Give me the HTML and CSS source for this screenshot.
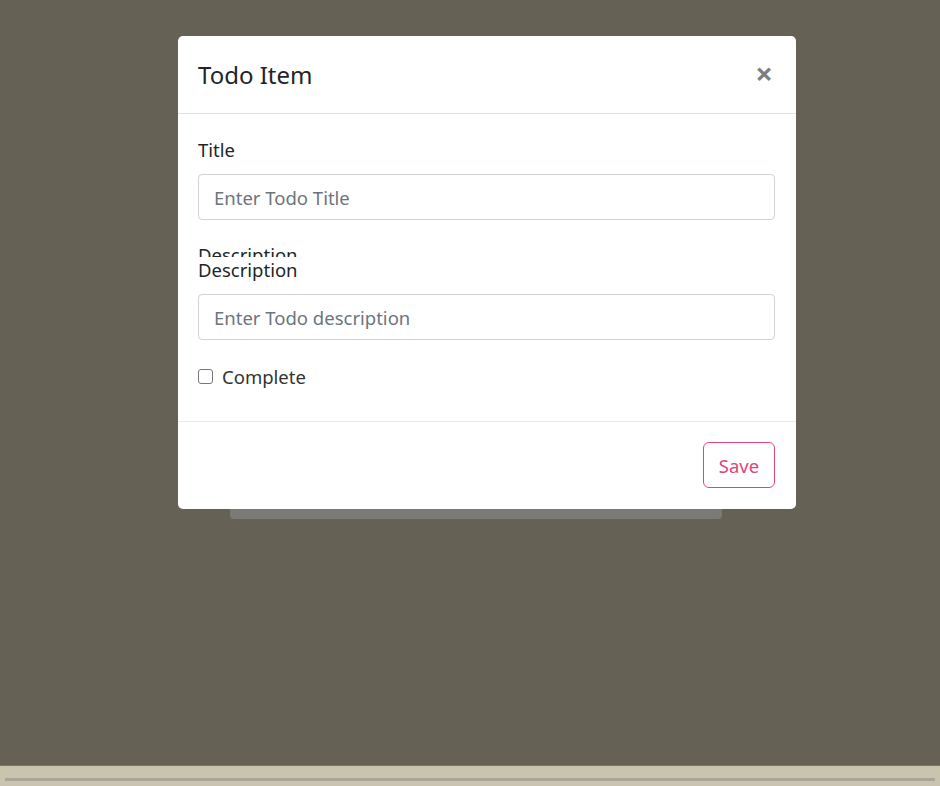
FILE: index.html
```html
<!DOCTYPE html>
<html>
<head>
<meta charset="utf-8">
<link rel="stylesheet" href="styles.css">
</head>
<body>
<div class="screen">
  <div class="page">
    <div class="card-behind"></div>
  </div>
  <div class="modal">
    <div class="modal-header">
      <h5 class="modal-title">Todo Item</h5>
      <span class="close">&times;</span>
    </div>
    <div class="modal-body">
      <label class="label">Title</label>
      <input class="input" type="text" placeholder="Enter Todo Title">
      <div class="label clipped">Description</div>
      <label class="label overlap">Description</label>
      <input class="input" type="text" placeholder="Enter Todo description">
      <label class="check-row"><span class="checkbox"></span><span>Complete</span></label>
    </div>
    <div class="modal-footer">
      <button class="btn-save">Save</button>
    </div>
  </div>
</div>
<div class="bottom-strip"><div class="strip-line"></div></div>
</body>
</html>
```

FILE: styles.css
```css
* { box-sizing: border-box; }
html, body { margin: 0; padding: 0; }
body {
  width: 940px;
  height: 786px;
  overflow: hidden;
  font-family: "Noto Sans", "Open Sans", sans-serif;
  background: #cac3ae;
}
.screen {
  position: relative;
  height: 766px;
  background: #656154;
  border-bottom: 1px solid #7a7566;
}
.page {
  padding-top: 36px;
  padding-left: 230px;
}
.card-behind {
  width: 492px;
  height: 483px;
  background: #7b7a77;
  border-radius: 0 0 4px 4px;
}
.modal {
  position: absolute;
  left: 178px;
  top: 36px;
  width: 618px;
  background: #fff;
  border-radius: 5px;
  display: flex;
  flex-direction: column;
}
.modal-header {
  display: flex;
  align-items: center;
  justify-content: space-between;
  padding: 24px 23px 23px 20px;
  border-bottom: 1px solid #dee2e6;
}
.modal-title {
  margin: 0;
  font-size: 24px;
  font-weight: 400;
  line-height: 30px;
  color: #212529;
}
.close {
  font-size: 31px;
  font-weight: 700;
  line-height: 30px;
  color: #000;
  opacity: 0.5;
  margin-top: -5px;
}
.modal-body {
  padding: 24px 21px 32px 20px;
  display: flex;
  flex-direction: column;
}
.label {
  display: block;
  font-size: 18.5px;
  line-height: 24px;
  color: #212529;
  margin-bottom: 12px;
}
.clipped {
  height: 14px;
  overflow: hidden;
  margin-top: 23px;
  margin-bottom: 0;
}
.overlap {
  margin-top: 1px;
}
.input {
  display: block;
  width: 100%;
  height: 46px;
  padding: 0 15px;
  font-family: inherit;
  font-size: 18.5px;
  color: #495057;
  border: 1px solid #ced4da;
  border-radius: 4px;
  background: #fff;
  outline: none;
}
.input::placeholder { color: #6c757d; }
.check-row {
  display: flex;
  align-items: center;
  gap: 9px;
  margin-top: 25px;
  font-size: 18.5px;
  line-height: 24px;
  color: #333;
}
.checkbox {
  width: 15px;
  height: 15px;
  border: 1px solid #767676;
  border-radius: 3px;
  background: #fff;
  margin-top: -2px;
}
.modal-footer {
  display: flex;
  justify-content: flex-end;
  padding: 20px 21px 21px 20px;
  border-top: 1px solid #e9ecef;
}
.btn-save {
  width: 72px;
  height: 46px;
  font-family: inherit;
  font-size: 18.5px;
  color: #e0467a;
  background: #fff;
  border: 1px solid #e0467a;
  border-radius: 6px;
  padding: 0;
}
.bottom-strip {
  height: 19px;
  padding-top: 12px;
  padding-left: 5px;
  padding-right: 5px;
}
.strip-line {
  height: 3px;
  background: #a9a598;
}
```
